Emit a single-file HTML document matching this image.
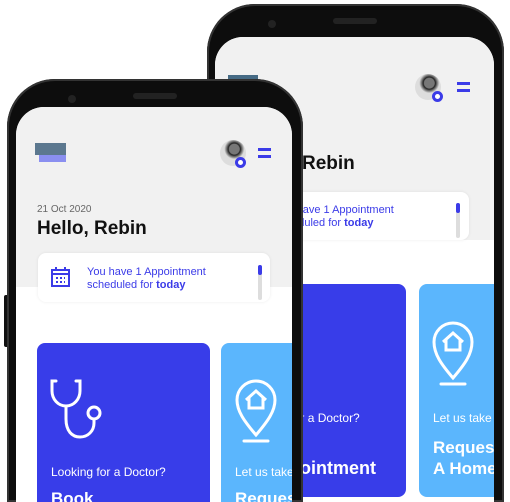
<!DOCTYPE html><html><head><style>
*{margin:0;padding:0;box-sizing:border-box}
html,body{width:510px;height:502px;overflow:hidden}
body{background:#fff;position:relative;font-family:"Liberation Sans",sans-serif}
.abs{position:absolute}
.frame{position:absolute;background:#0d0d0d;border-radius:48px 48px 0 0;box-shadow:inset 0 0 0 2px #333}
.screen{position:absolute;overflow:hidden;border-radius:28px 28px 0 0;background:#fff}
.gray{position:absolute;left:0;right:0;top:0;background:#f1f1f1}
.card{position:absolute;background:#fff;border-radius:8px;box-shadow:0 0 3px rgba(0,0,0,.08)}
.t1{position:absolute;color:#3b3be8;font-size:11px;line-height:13px}
.blue{position:absolute;background:#383de9;border-radius:8px}
.lblue{position:absolute;background:#5bb6fd;border-radius:8px}
.w{position:absolute;color:#fff;white-space:nowrap}
.av{position:absolute;width:26px;height:26px;border-radius:50%;background:radial-gradient(circle at 55% 35%,#777 0 5px,#222 6px,#ddd 10px)}
.badge{position:absolute;width:11px;height:11px;border-radius:50%;border:3px solid #3b3be8;background:#fff}
.ham{position:absolute;width:13px;height:10px;border-top:3px solid #3b3be8;border-bottom:3px solid #3b3be8}
</style></head><body>
<!-- back phone -->
<div class="frame" style="left:207px;top:4px;width:297px;height:498px"></div>
<div class="abs" style="left:268px;top:20px;width:8px;height:8px;border-radius:50%;background:#222"></div>
<div class="abs" style="left:333px;top:18px;width:44px;height:6px;border-radius:3px;background:#222"></div>
<div class="screen" style="left:215px;top:37px;width:279px;height:465px">
 <div class="gray" style="height:203px"></div>
 <div class="abs" style="left:13px;top:38px;width:30px;height:18px;background:#1c4a6a;opacity:.8"></div>
 <div class="av" style="left:200px;top:37px"></div><div class="badge" style="left:217px;top:54px"></div>
 <div class="ham" style="left:242px;top:45px"></div>
 <div class="abs" style="left:30px;top:116px;font-size:19px;font-weight:bold;color:#111">Hello, Rebin</div>
 <div class="card" style="left:22px;top:155px;width:232px;height:48px"></div>
 <div class="t1" style="left:60px;top:167px">You have 1 Appointment<br>scheduled for <b>today</b></div>
 <div class="abs" style="left:241px;top:166px;width:4px;height:35px;border-radius:2px;background:#ddd"></div>
 <div class="abs" style="left:241px;top:166px;width:4px;height:10px;border-radius:2px;background:#3b3be8"></div>
 <div class="blue" style="left:22px;top:247px;width:169px;height:213px"></div>
 <div class="w" style="left:30px;top:374px;font-size:12px">Looking for a Doctor?</div>
 <div class="w" style="left:30px;top:400px;font-size:18px;font-weight:bold;line-height:21px">Book</div>
 <div class="w" style="left:50px;top:421px;font-size:18px;font-weight:bold;line-height:21px">Appointment</div>
 <div class="lblue" style="left:204px;top:247px;width:90px;height:213px"></div>
 <svg class="abs" style="left:216px;top:283px" width="44" height="66" viewBox="0 0 44 66" fill="none" stroke="#fff" stroke-width="3"><path d="M22 58 C10 44 3 34 3 22 A19 19 0 0 1 41 22 C41 34 34 44 22 58Z"/><path d="M12 22 L22 13 L32 22 M15 20 V30 H29 V20"/><path d="M10 64 H34" stroke-linecap="round"/></svg>
 <div class="w" style="left:218px;top:374px;font-size:12px">Let us take care</div>
 <div class="w" style="left:218px;top:400px;font-size:17px;font-weight:bold;line-height:21px">Request<br>A Home Visit</div>
</div>
<!-- front phone -->
<div class="abs" style="left:4px;top:295px;width:5px;height:52px;background:#111;border-radius:2px"></div>
<div class="frame" style="left:7px;top:79px;width:296px;height:423px"></div>
<div class="abs" style="left:68px;top:95px;width:8px;height:8px;border-radius:50%;background:#222"></div>
<div class="abs" style="left:133px;top:93px;width:44px;height:6px;border-radius:3px;background:#222"></div>
<div class="screen" style="left:16px;top:107px;width:276px;height:395px">
 <div class="gray" style="height:180px"></div>
 <div class="abs" style="left:19px;top:36px;width:31px;height:12px;background:#2a4f6e;opacity:.75"></div>
 <div class="abs" style="left:23px;top:48px;width:27px;height:7px;background:#8a8ff0"></div>
 <div class="av" style="left:204px;top:33px"></div><div class="badge" style="left:219px;top:50px"></div>
 <div class="ham" style="left:242px;top:41px"></div>
 <div class="abs" style="left:21px;top:97px;font-size:10px;color:#666">21 Oct 2020</div>
 <div class="abs" style="left:21px;top:111px;font-size:19px;font-weight:bold;color:#111">Hello, Rebin</div>
 <div class="card" style="left:22px;top:146px;width:232px;height:49px"></div>
 <svg class="abs" style="left:35px;top:160px" width="19" height="20" viewBox="0 0 19 20" fill="none" stroke="#3b3be8" stroke-width="2"><rect x="1" y="3" width="17" height="16"/><path d="M1 7H18M5 0V4M14 0V4"/><path d="M5 11h2M9 11h2M13 11h1M5 15h2M9 15h2M13 15h1" stroke-width="2"/></svg>
 <div class="t1" style="left:71px;top:159px">You have 1 Appointment<br>scheduled for <b>today</b></div>
 <div class="abs" style="left:242px;top:158px;width:4px;height:35px;border-radius:2px;background:#ddd"></div>
 <div class="abs" style="left:242px;top:158px;width:4px;height:10px;border-radius:2px;background:#3b3be8"></div>
 <div class="blue" style="left:21px;top:236px;width:173px;height:180px"></div>
 <svg class="abs" style="left:34px;top:272px" width="54" height="62" viewBox="0 0 54 62" fill="none" stroke="#fff" stroke-width="3" stroke-linecap="round"><path d="M6 2 H2 V12 C2 20 8 27 16 27 C24 27 30 20 30 12 V2 H26"/><path d="M16 27 V40 C16 52 22 58 30 58 C38 58 44 52 44 44 V40"/><circle cx="44" cy="34" r="6"/></svg>
 <div class="w" style="left:35px;top:358px;font-size:12px">Looking for a Doctor?</div>
 <div class="w" style="left:35px;top:381px;font-size:17px;font-weight:bold;line-height:21px">Book</div>
 <div class="lblue" style="left:205px;top:236px;width:80px;height:180px"></div>
 <svg class="abs" style="left:218px;top:272px" width="44" height="66" viewBox="0 0 44 66" fill="none" stroke="#fff" stroke-width="3"><path d="M22 56 C10 42 3 32 3 21 A19 19 0 0 1 41 21 C41 32 34 42 22 56Z"/><path d="M12 21 L22 12 L32 21 M15 19 V29 H29 V19"/><path d="M10 62 H34" stroke-linecap="round"/></svg>
 <div class="w" style="left:219px;top:358px;font-size:12px">Let us take care</div>
 <div class="w" style="left:219px;top:381px;font-size:17px;font-weight:bold;line-height:21px">Request</div>
</div>
</body></html>
